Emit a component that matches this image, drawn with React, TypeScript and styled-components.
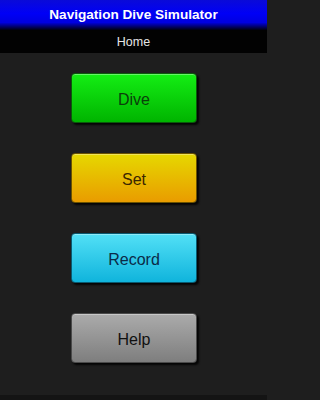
import styled, { createGlobalStyle } from "styled-components"

const GlobalStyle = createGlobalStyle`
  html, body {
    margin: 0;
    padding: 0;
    background: #1e1e1e;
  }
  body {
    font-family: "Liberation Sans", Arial, sans-serif;
  }
`

const Screen = styled.div`
  width: 267px;
  height: 400px;
  display: flex;
  flex-direction: column;
  background: #1e1e1e;
  overflow: hidden;
`

const TitleBar = styled.div`
  height: 30px;
  display: flex;
  align-items: center;
  justify-content: center;
  padding-bottom: 2px;
  box-sizing: border-box;
  background: linear-gradient(to bottom, #0a0ad8 0%, #0000f6 45%, #0000e0 75%, #000010 100%);
  color: #fff;
  font-weight: bold;
  font-size: 13.6px;
`

const NavBar = styled.div`
  height: 23px;
  display: flex;
  align-items: center;
  justify-content: center;
  background: #020202;
  color: #e6e6e6;
  font-size: 12.5px;
  padding-top: 1px;
  box-sizing: border-box;
`

const Menu = styled.div`
  flex: 1;
  display: flex;
  flex-direction: column;
  align-items: center;
  gap: 30px;
  padding-top: 20px;
  border-bottom: 5px solid #141414;
`

type Tone = { top: string; bottom: string; edge: string; text: string }

const tones: Record<string, Tone> = {
  green: { top: "#14ee14", bottom: "#00b400", edge: "#0a5a0a", text: "#0b3f0b" },
  yellow: { top: "#e6d800", bottom: "#e99c00", edge: "#6a5200", text: "#3a2600" },
  cyan: { top: "#52e0f6", bottom: "#10b4dc", edge: "#0a5a70", text: "#0b2b48" },
  gray: { top: "#ababab", bottom: "#7e7e7e", edge: "#4a4a4a", text: "#111" },
}

const MenuButton = styled.button<{ $tone: Tone }>`
  width: 126px;
  height: 50px;
  margin-left: 1px;
  padding: 4px 0 0;
  border: 1px solid ${(p) => p.$tone.edge};
  border-radius: 4px;
  background: linear-gradient(to bottom, ${(p) => p.$tone.top}, ${(p) => p.$tone.bottom});
  box-shadow: inset 0 1px 0 rgba(255, 255, 255, 0.35), 2px 2px 2px rgba(0, 0, 0, 0.85);
  color: ${(p) => p.$tone.text};
  font-family: "Liberation Sans", Arial, sans-serif;
  font-size: 16px;
  cursor: pointer;
`

const items = [
  { label: "Dive", tone: tones.green },
  { label: "Set", tone: tones.yellow },
  { label: "Record", tone: tones.cyan },
  { label: "Help", tone: tones.gray },
]

export default function App() {
  return (
    <Screen>
      <GlobalStyle />
      <TitleBar>Navigation Dive Simulator</TitleBar>
      <NavBar>Home</NavBar>
      <Menu>
        {items.map((it) => (
          <MenuButton key={it.label} $tone={it.tone}>
            {it.label}
          </MenuButton>
        ))}
      </Menu>
    </Screen>
  )
}
